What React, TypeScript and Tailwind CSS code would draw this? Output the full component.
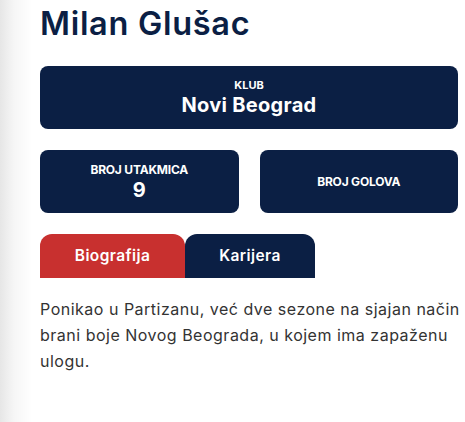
export default function App() {
  const font = { fontFamily: "Inter, 'Noto Sans', sans-serif" };
  return (
    <div
      className="min-h-[422px] w-[465px] bg-[linear-gradient(to_right,#e6e6e6_0px,#f6f6f6_14px,#ffffff_32px)] pl-10 pr-[7px] pt-[4px]"
      style={font}
    >
      <h1 className="text-[32.5px] leading-[40px] font-semibold text-[#0b1f44] tracking-[0.7px]">Milan Glušac</h1>
      <div className="mt-[22px] h-[63px] rounded-lg bg-[#0b1f44] flex flex-col items-center justify-center text-white">
        <div className="text-[11px] leading-[14px] font-bold">KLUB</div>
        <div className="text-[20px] leading-[26px] font-bold tracking-[0.3px]">Novi Beograd</div>
      </div>
      <div className="mt-[21px] grid grid-cols-2 gap-[21px]">
        <div className="h-[63px] rounded-lg bg-[#0b1f44] flex flex-col items-center justify-center text-white">
          <div className="text-[12px] leading-[16px] font-bold tracking-[-0.2px]">BROJ UTAKMICA</div>
          <div className="text-[20px] leading-[24px] font-bold">9</div>
        </div>
        <div className="h-[63px] rounded-lg bg-[#0b1f44] flex flex-col items-center justify-center text-white">
          <div className="text-[12px] leading-[16px] font-bold tracking-[-0.2px]">BROJ GOLOVA</div>
        </div>
      </div>
      <div className="mt-[21px] flex">
        <div className="w-[145px] h-[44px] rounded-t-xl bg-[#c8302f] text-white flex items-center justify-center text-[15.5px] font-semibold tracking-[0.4px]">
          Biografija
        </div>
        <div className="w-[130px] h-[44px] rounded-t-xl bg-[#0b1f44] text-white flex items-center justify-center text-[15.5px] font-semibold tracking-[0.4px]">
          Karijera
        </div>
      </div>
      <p className="mt-[18px] -mr-[7px] text-[16px] leading-[26px] text-[#333333] tracking-[0.5px]">
        Ponikao u Partizanu, već dve sezone na sjajan način brani boje Novog Beograda, u kojem ima zapaženu ulogu.
      </p>
    </div>
  );
}
